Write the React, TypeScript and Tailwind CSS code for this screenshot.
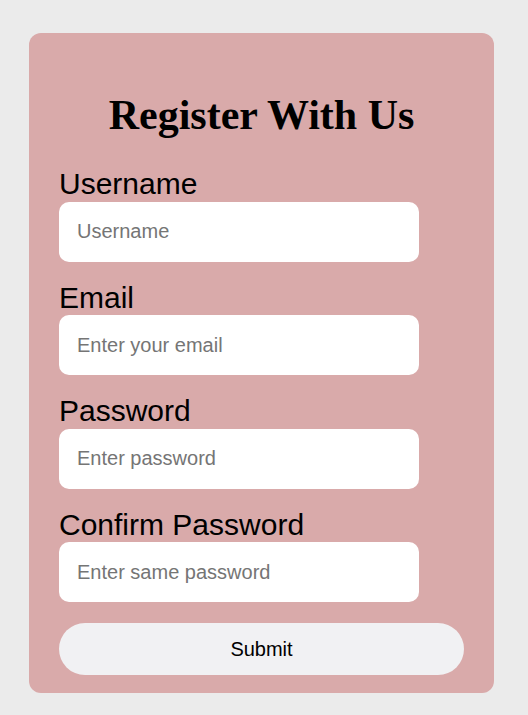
export default function App() {
  const fields = [
    { label: "Username", placeholder: "Username", type: "text" },
    { label: "Email", placeholder: "Enter your email", type: "email" },
    { label: "Password", placeholder: "Enter password", type: "password" },
    { label: "Confirm Password", placeholder: "Enter same password", type: "password" },
  ];

  return (
    <div className="min-h-[715px] w-full bg-[#ebebeb] pt-[33px] pl-[29px]">
      <form className="w-[465px] h-[660px] rounded-[12px] bg-[#d9aaaa] px-[30px] pt-[24px] font-['Liberation_Sans',Arial,sans-serif]">
        <h1 className="mt-[27px] mb-[20px] text-center text-[42px] font-bold leading-normal text-black font-['Liberation_Serif','Times_New_Roman',serif]">
          Register With Us
        </h1>

        {fields.map((f) => (
          <div key={f.label} className="mb-[19px]">
            <label className="block text-[30px] leading-[34.5px] text-black">{f.label}</label>
            <input
              type={f.type}
              placeholder={f.placeholder}
              className="block h-[60px] w-[360px] rounded-[10px] bg-white px-[18px] text-[20px] text-black outline-none placeholder:text-[#757575]"
            />
          </div>
        ))}

        <button
          type="button"
          className="mt-[2px] h-[52px] w-[405px] rounded-full bg-[#f1f1f3] text-[20px] text-black"
        >
          Submit
        </button>
      </form>
    </div>
  );
}
